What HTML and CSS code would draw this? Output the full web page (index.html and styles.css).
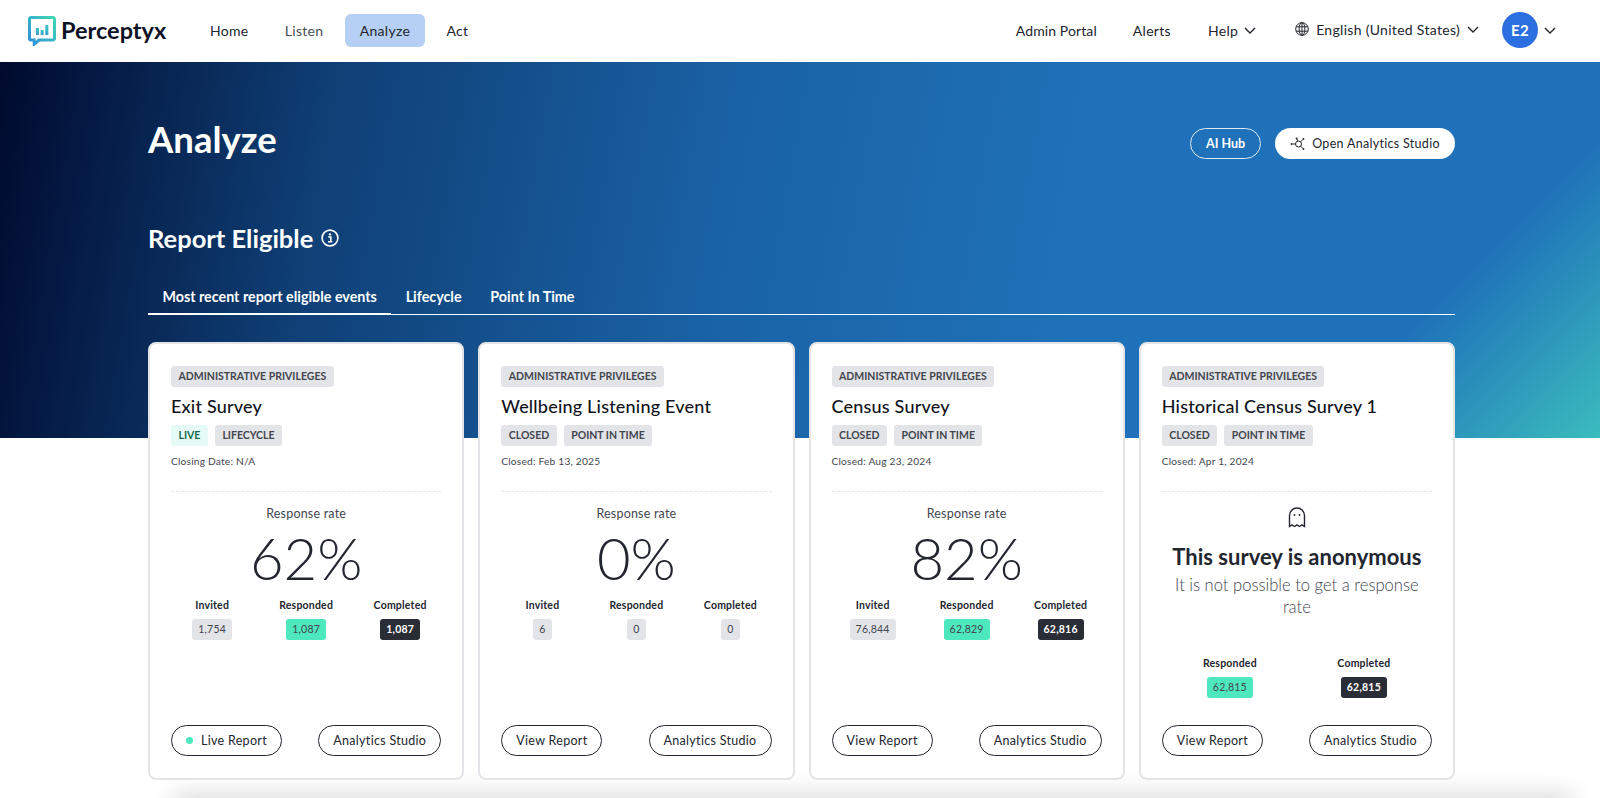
FILE: index.html
```html
<!DOCTYPE html>
<html lang="en">
<head>
    <meta charset="UTF-8">
    <meta name="viewport" content="width=device-width, initial-scale=1.0">
    <title>Perceptyx - Analyze</title>
    <link rel="stylesheet" href="styles.css">
</head>
<body>
    <header class="navbar">
        <div class="logo">
            <svg class="logo-icon" width="28" height="30" viewBox="0 0 28 30">
                <defs>
                    <linearGradient id="logo-grad" x1="0" y1="1" x2="1" y2="0">
                        <stop offset="0" stop-color="#2f8fd8"/>
                        <stop offset="1" stop-color="#3fd8b4"/>
                    </linearGradient>
                </defs>
                <path d="M3 1.5h22a1.5 1.5 0 0 1 1.5 1.5v19.5a1.5 1.5 0 0 1-1.5 1.5H11l-4.8 4.2V24H3a1.5 1.5 0 0 1-1.5-1.5V3A1.5 1.5 0 0 1 3 1.5z" fill="none" stroke="url(#logo-grad)" stroke-width="3"/>
                <rect x="8" y="12" width="3" height="7" fill="url(#logo-grad)"/>
                <rect x="12.7" y="14" width="3" height="5" fill="url(#logo-grad)"/>
                <rect x="17.4" y="9" width="3" height="10" fill="url(#logo-grad)"/>
            </svg>
            <span class="logo-text">Perceptyx</span>
        </div>
        <nav class="nav-links">
            <a href="#">Home</a>
            <a href="#" class="muted">Listen</a>
            <a href="#" class="active">Analyze</a>
            <a href="#">Act</a>
        </nav>
        <div class="nav-right">
            <a href="#" class="nav-admin">Admin Portal</a>
            <a href="#" class="nav-alerts">Alerts</a>
            <a href="#" class="nav-help">Help
                <svg class="chevron" width="12" height="7" viewBox="0 0 12 7"><path d="M1 1l5 5 5-5"/></svg>
            </a>
            <a href="#" class="nav-lang">
                <svg class="globe" width="14" height="14" viewBox="0 0 14 14">
                    <circle cx="7" cy="7" r="6.3"/>
                    <ellipse cx="7" cy="7" rx="2.9" ry="6.3"/>
                    <path d="M1 4.8h12M1 9.2h12M7 .7v12.6"/>
                </svg>
                English (United States)
                <svg class="chevron" width="12" height="7" viewBox="0 0 12 7"><path d="M1 1l5 5 5-5"/></svg>
            </a>
            <span class="avatar">E2</span>
            <svg class="chevron" width="12" height="7" viewBox="0 0 12 7"><path d="M1 1l5 5 5-5"/></svg>
        </div>
    </header>

    <main class="content">
        <div class="title-row">
            <h1>Analyze</h1>
            <div class="title-actions">
                <a href="#" class="btn-outline">AI Hub</a>
                <a href="#" class="btn-white">
                    <svg width="16" height="14" viewBox="0 0 16 14">
                        <circle cx="8.5" cy="7" r="3"/>
                        <circle cx="1.6" cy="7" r="1" class="dot"/>
                        <circle cx="13.4" cy="2" r="1" class="dot"/>
                        <circle cx="13.4" cy="12" r="1" class="dot"/>
                        <circle cx="6.6" cy="1.4" r="1" class="dot"/>
                        <path d="M2.6 7h2.9M10.6 4.9l2-2.1M10.6 9.1l2 2.1M7.8 4l-.8-2"/>
                    </svg>
                    Open Analytics Studio
                </a>
            </div>
        </div>

        <h2 class="section-title">Report Eligible
            <svg width="18" height="18" viewBox="0 0 18 18">
                <circle cx="9" cy="9" r="7.9" fill="none" stroke="#fff" stroke-width="1.6"/>
                <circle cx="9" cy="5.4" r="1.2" fill="#fff"/>
                <path d="M7.2 8h2.6v4.6M7 12.8h4.2" fill="none" stroke="#fff" stroke-width="1.6"/>
            </svg>
        </h2>

        <div class="tabs">
            <a href="#" class="tab active">Most recent report eligible events</a>
            <a href="#" class="tab">Lifecycle</a>
            <a href="#" class="tab">Point In Time</a>
        </div>

        <div class="cards">
            <section class="card">
                <span class="chip">Administrative Privileges</span>
                <h3>Exit Survey</h3>
                <div class="chip-row">
                    <span class="chip live">Live</span>
                    <span class="chip">Lifecycle</span>
                </div>
                <p class="closed">Closing Date: N/A</p>
                <div class="rate">
                    <p class="rate-label">Response rate</p>
                    <p class="rate-value">62%</p>
                    <div class="stats">
                        <div class="stat"><span>Invited</span><b class="num">1,754</b></div>
                        <div class="stat"><span>Responded</span><b class="num green">1,087</b></div>
                        <div class="stat"><span>Completed</span><b class="num dark">1,087</b></div>
                    </div>
                </div>
                <div class="card-buttons">
                    <a href="#" class="btn btn-live"><i class="live-dot"></i>Live Report</a>
                    <a href="#" class="btn">Analytics Studio</a>
                </div>
            </section>

            <section class="card">
                <span class="chip">Administrative Privileges</span>
                <h3>Wellbeing Listening Event</h3>
                <div class="chip-row">
                    <span class="chip">Closed</span>
                    <span class="chip">Point In Time</span>
                </div>
                <p class="closed">Closed: Feb 13, 2025</p>
                <div class="rate">
                    <p class="rate-label">Response rate</p>
                    <p class="rate-value">0%</p>
                    <div class="stats">
                        <div class="stat"><span>Invited</span><b class="num">6</b></div>
                        <div class="stat"><span>Responded</span><b class="num">0</b></div>
                        <div class="stat"><span>Completed</span><b class="num">0</b></div>
                    </div>
                </div>
                <div class="card-buttons">
                    <a href="#" class="btn">View Report</a>
                    <a href="#" class="btn">Analytics Studio</a>
                </div>
            </section>

            <section class="card">
                <span class="chip">Administrative Privileges</span>
                <h3>Census Survey</h3>
                <div class="chip-row">
                    <span class="chip">Closed</span>
                    <span class="chip">Point In Time</span>
                </div>
                <p class="closed">Closed: Aug 23, 2024</p>
                <div class="rate">
                    <p class="rate-label">Response rate</p>
                    <p class="rate-value">82%</p>
                    <div class="stats">
                        <div class="stat"><span>Invited</span><b class="num">76,844</b></div>
                        <div class="stat"><span>Responded</span><b class="num green">62,829</b></div>
                        <div class="stat"><span>Completed</span><b class="num dark">62,816</b></div>
                    </div>
                </div>
                <div class="card-buttons">
                    <a href="#" class="btn">View Report</a>
                    <a href="#" class="btn">Analytics Studio</a>
                </div>
            </section>

            <section class="card">
                <span class="chip">Administrative Privileges</span>
                <h3>Historical Census Survey 1</h3>
                <div class="chip-row">
                    <span class="chip">Closed</span>
                    <span class="chip">Point In Time</span>
                </div>
                <p class="closed">Closed: Apr 1, 2024</p>
                <div class="rate anon">
                    <svg class="ghost" width="18" height="21" viewBox="0 0 18 21">
                        <path d="M1.5 19.5V8.5a7.5 7.5 0 0 1 15 0v11l-2.5-1.6-2.5 1.6-2.5-1.6-2.5 1.6L4 17.9z"/>
                        <circle cx="6.5" cy="8" r=".9" class="eye"/>
                        <circle cx="11.5" cy="8" r=".9" class="eye"/>
                    </svg>
                    <p class="anon-title">This survey is anonymous</p>
                    <p class="anon-text">It is not possible to get a response rate</p>
                    <div class="stats two">
                        <div class="stat"><span>Responded</span><b class="num green">62,815</b></div>
                        <div class="stat"><span>Completed</span><b class="num dark">62,815</b></div>
                    </div>
                </div>
                <div class="card-buttons">
                    <a href="#" class="btn">View Report</a>
                    <a href="#" class="btn">Analytics Studio</a>
                </div>
            </section>
        </div>
    </main>
    <div class="page-bottom"></div>
</body>
</html>
```

FILE: styles.css
```css
* {
    box-sizing: border-box;
}
body {
    margin: 0;
    font-family: Lato, "Open Sans", sans-serif;
    color: #23262f;
    background: #fff;
    height: 798px;
    overflow: hidden;
}
a {
    color: inherit;
    text-decoration: none;
}
p, h1, h2, h3 {
    margin: 0;
}

/* top bar */
.navbar {
    height: 62px;
    display: flex;
    align-items: center;
    padding: 0 44px 2px 28px;
    background: #fff;
    font-size: 14px;
    letter-spacing: 0.3px;
}
.logo {
    display: flex;
    align-items: center;
    gap: 5px;
    width: 167px;
}
.logo-icon {
    margin-top: 2px;
}
.logo-text {
    font-size: 23.5px;
    font-weight: 700;
    color: #0d1226;
    letter-spacing: 0;
}
.nav-links {
    display: flex;
    align-items: center;
}
.nav-links a {
    height: 33px;
    line-height: 33px;
    padding: 0 15px;
    margin-right: 6.3px;
    border-radius: 6px;
}
.nav-links .muted {
    color: #4a4d58;
}
.nav-links .active {
    background: #b6cff4;
}
.nav-right {
    margin-left: auto;
    display: flex;
    align-items: center;
}
.nav-admin {
    margin-right: 36px;
    letter-spacing: 0.1px;
}
.nav-alerts {
    margin-right: 37px;
}
.nav-help {
    display: flex;
    align-items: center;
    gap: 6px;
    margin-right: 39px;
}
.nav-lang {
    display: flex;
    align-items: center;
    gap: 7px;
    margin-right: 23px;
    margin-top: -2px;
}
.chevron {
    fill: none;
    stroke: #23262f;
    stroke-width: 1.4;
}
.globe {
    fill: none;
    stroke: #23262f;
    stroke-width: 1;
}
.avatar {
    width: 36px;
    height: 36px;
    border-radius: 50%;
    background: #2b6fe0;
    color: #fff;
    font-weight: 700;
    font-size: 15px;
    text-align: center;
    line-height: 36px;
    margin-right: 6px;
}

/* hero gradient only covers the top part, the cards run past it */
.content {
    height: 736px;
    padding: 0 145px 0 148px;
    background-image:
        linear-gradient(135deg, rgba(59, 188, 189, 0) 85%, #3bbcbd 100%),
        linear-gradient(100deg, #000a2e 0%, #0f3f75 20%, #1a62a6 45%, #1f72b9 68%);
    background-size: 100% 376px;
    background-repeat: no-repeat;
}
.title-row {
    height: 100px;
    padding-top: 56px;
    display: flex;
    justify-content: space-between;
    align-items: flex-start;
}
h1 {
    font-size: 36.5px;
    line-height: 44px;
    color: #fff;
    font-weight: 700;
    margin-top: -1px;
}
.title-actions {
    display: flex;
    gap: 14px;
    margin-top: 10px;
}
.btn-outline,
.btn-white {
    height: 31px;
    border-radius: 16px;
    font-size: 12.5px;
    font-weight: 700;
    display: flex;
    align-items: center;
    justify-content: center;
}
.btn-outline {
    width: 71px;
    border: 1px solid #dfe8f3;
    color: #fff;
}
.btn-white {
    width: 180px;
    gap: 6px;
    background: #fff;
    color: #23262f;
    font-weight: 400;
    letter-spacing: 0.3px;
}
.btn-white svg {
    fill: none;
    stroke: #23262f;
    stroke-width: 1;
}
.btn-white .dot {
    fill: #23262f;
    stroke: none;
}
.section-title {
    margin-top: 60px;
    height: 32px;
    display: flex;
    align-items: center;
    gap: 8px;
    font-size: 25.5px;
    font-weight: 700;
    color: #fff;
}
.tabs {
    margin-top: 29px;
    height: 32px;
    display: flex;
    border-bottom: 1px solid #fff;
}
.tab {
    height: 32px;
    padding: 0 14.4px;
    line-height: 28px;
    font-size: 14.3px;
    font-weight: 700;
    color: #fff;
}
.tab.active {
    border-bottom: 2px solid #fff;
}

/* cards */
.cards {
    margin-top: 27px;
    display: grid;
    grid-template-columns: repeat(4, minmax(0, 1fr));
    gap: 14px;
}
.card {
    height: 438px;
    padding: 22px 21px;
    background: #fff;
    border: 2px solid #e3e4e8;
    border-radius: 8px;
    display: flex;
    flex-direction: column;
    align-items: flex-start;
}
.chip {
    display: inline-block;
    height: 21px;
    line-height: 21px;
    padding: 0 7.5px;
    border-radius: 3px;
    background: #e3e4e8;
    color: #43464f;
    font-size: 10.5px;
    font-weight: 700;
    text-transform: uppercase;
    white-space: nowrap;
}
.chip.live {
    background: #e6fbf5;
    color: #146b50;
}
h3 {
    margin-top: 8px;
    font-size: 18px;
    line-height: 22px;
    font-weight: 500;
    color: #111420;
    letter-spacing: 0.2px;
}
.chip-row {
    margin-top: 8px;
    display: flex;
    gap: 7px;
}
.closed {
    margin-top: 8px;
    font-size: 10.2px;
    line-height: 14px;
    color: #43464f;
    letter-spacing: 0.2px;
}
.rate {
    margin-top: 23px;
    width: 100%;
    height: 238px;
    border-top: 1px dashed #e3e4e8;
    padding-top: 14px;
    text-align: center;
}
.rate-label {
    font-size: 12.5px;
    line-height: 16px;
    color: #43464f;
    letter-spacing: 0.2px;
}
.rate-value {
    margin-top: 4px;
    font-size: 58px;
    line-height: 64px;
    font-weight: 300;
    color: #23262f;
}
.stats {
    margin-top: 9px;
    display: grid;
    grid-template-columns: repeat(3, 94px);
    justify-content: center;
}
.stats.two {
    grid-template-columns: repeat(2, 134px);
    margin-top: 39px;
}
.stat {
    display: flex;
    flex-direction: column;
    align-items: center;
    gap: 7px;
    font-size: 10.5px;
    font-weight: 700;
    line-height: 13px;
    color: #23262f;
    letter-spacing: 0.2px;
}
.num {
    height: 21px;
    line-height: 21px;
    min-width: 18px;
    padding: 0 6px;
    border-radius: 3px;
    background: #e3e4e8;
    color: #43464f;
    font-weight: 400;
}
.num.green {
    background: #4de8bd;
}
.num.dark {
    background: #2a2d36;
    color: #fff;
    font-weight: 700;
}
.ghost {
    display: block;
    margin: 1px auto 0;
    fill: none;
    stroke: #23262f;
    stroke-width: 1.4;
}
.ghost .eye {
    fill: #23262f;
    stroke: none;
}
.anon-title {
    margin-top: 16px;
    font-size: 22px;
    line-height: 26px;
    font-weight: 700;
    color: #23262f;
}
.anon-text {
    margin-top: 4px;
    font-size: 16.6px;
    line-height: 22px;
    font-weight: 300;
    color: #43464f;
    padding: 0 2px;
}
.card-buttons {
    width: 100%;
    display: flex;
    justify-content: space-between;
}
.btn {
    height: 31px;
    padding: 0 14px;
    border: 1px solid #23262f;
    border-radius: 16px;
    display: flex;
    align-items: center;
    font-size: 12.5px;
    letter-spacing: 0.3px;
    color: #23262f;
    white-space: nowrap;
}
.live-dot {
    width: 7px;
    height: 7px;
    border-radius: 50%;
    background: #4de8bd;
    margin-right: 8px;
}

/* soft shadow rising from just under the window edge */
.page-bottom {
    height: 12px;
    margin: 0 30px 0 175px;
    box-shadow: 0 0 24px 2px rgba(0, 0, 0, 0.2);
}
```
